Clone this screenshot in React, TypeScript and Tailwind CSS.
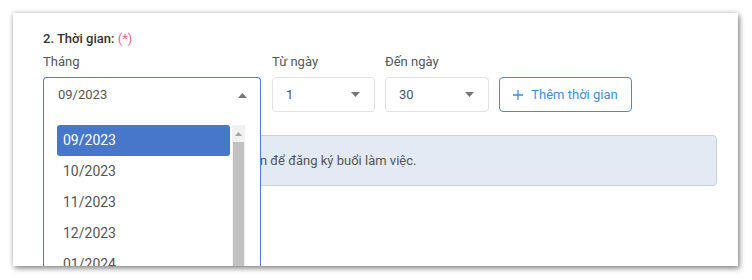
import React from 'react';

const months = ['09/2023', '10/2023', '11/2023', '12/2023', '01/2024'];

function Caret({ up = false }: { up?: boolean }) {
  return (
    <svg width="9" height="5" viewBox="0 0 9 5" className="shrink-0">
      {up ? <polygon points="0,5 9,5 4.5,0" fill="#777" /> : <polygon points="0,0 9,0 4.5,5" fill="#777" />}
    </svg>
  );
}

function DaySelect({ value }: { value: string }) {
  return (
    <div className="h-[35px] border border-[#e2e2e2] rounded-[4px] flex items-center justify-between pl-[13px] pr-[14px] text-[13px] text-[#555] bg-white">
      <span>{value}</span>
      <Caret />
    </div>
  );
}

export default function App() {
  return (
    <div className="w-[752px] h-[280px] bg-white p-[13px] pb-[14px] pr-[14px] font-['Roboto',sans-serif]">
      <div className="relative h-full bg-white overflow-hidden pt-[18px] pl-[30px] pr-[21px] shadow-[0_0_5px_rgba(0,0,0,0.25),2px_3px_5px_rgba(0,0,0,0.35)]">
        <div className="text-[13px] font-medium leading-4 text-[#333]">
          2. Thời gian: <span className="text-[#f0609a] font-normal">(*)</span>
        </div>
        <div className="flex items-end mt-[7px]">
          <div className="w-[218px] mr-[11px]">
            <div className="text-[13px] leading-4 text-[#555] mb-[7px]">Tháng</div>
            <div className="relative">
              <div className="h-[35px] border border-b-0 border-[#4a7fd6] rounded-t-[4px] flex items-center justify-between pl-[14px] pr-[13px] text-[13px] text-[#555] bg-white">
                <span>09/2023</span>
                <Caret up />
              </div>
              <div className="absolute left-0 right-0 top-full h-[200px] z-10 bg-white border-x border-[#4a7fd6] flex gap-[2px] pt-[13px] pl-[13px] pr-[15px]">
                <div className="w-[173px] flex flex-col">
                  {months.map((m, i) => (
                    <div
                      key={m}
                      className={
                        i === 0
                          ? 'h-[31px] shrink-0 flex items-center pl-[6px] rounded-[3px] bg-[#4677cb] text-white text-[14px]'
                          : 'h-[31px] shrink-0 flex items-center pl-[6px] text-[#555] text-[14px]'
                      }
                    >
                      {m}
                    </div>
                  ))}
                </div>
                <div className="w-[13px] bg-[#f1f1f1] flex flex-col items-center">
                  <div className="h-[17px] flex items-center justify-center">
                    <svg width="7" height="4" viewBox="0 0 7 4">
                      <polygon points="0,4 7,4 3.5,0" fill="#a3a3a3" />
                    </svg>
                  </div>
                  <div className="w-[11px] flex-1 bg-[#c1c1c1]" />
                </div>
              </div>
            </div>
          </div>
          <div className="w-[103px] mr-[10px]">
            <div className="text-[13px] leading-4 text-[#555] mb-[7px]">Từ ngày</div>
            <DaySelect value="1" />
          </div>
          <div className="w-[104px] mr-[10px]">
            <div className="text-[13px] leading-4 text-[#555] mb-[7px]">Đến ngày</div>
            <DaySelect value="30" />
          </div>
          <button className="w-[133px] h-[35px] border border-[#3b8ee0] rounded-[4px] flex items-center justify-center gap-[8px] text-[13px] text-[#3990e2] bg-white">
            <svg width="10" height="10" viewBox="0 0 10 10">
              <path d="M5 0v10M0 5h10" stroke="#3990e2" strokeWidth="1.3" />
            </svg>
            <span>Thêm thời gian</span>
          </button>
        </div>
        <div className="mt-[23px] h-[51px] border border-[#c8d1e2] bg-[#e4eaf4] rounded-[4px] flex items-center pl-[15px] text-[13px] text-[#555]">
          Bạn vui lòng chọn tháng và thời gian để đăng ký buổi làm việc.
        </div>
      </div>
    </div>
  );
}
